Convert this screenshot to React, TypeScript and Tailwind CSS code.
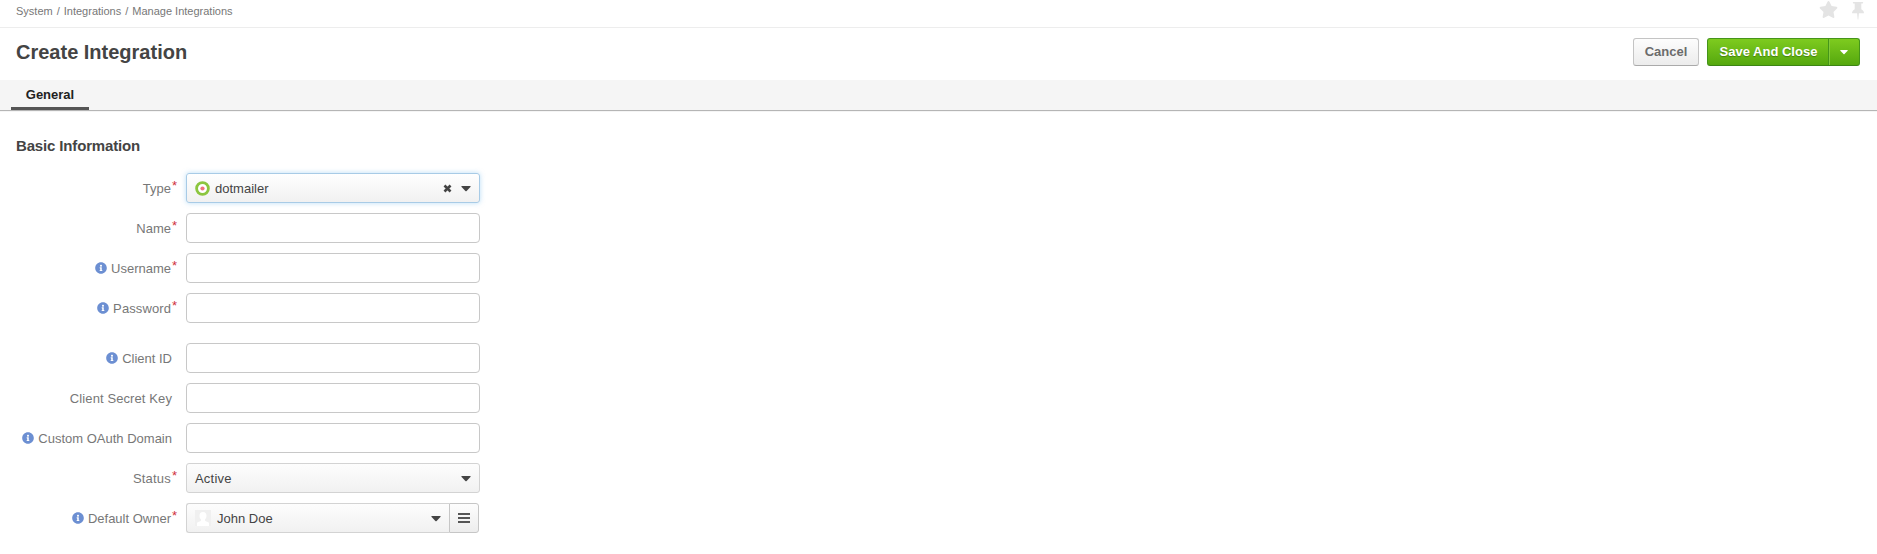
import type { ReactNode } from 'react';
import { FaInfoCircle, FaStar } from 'react-icons/fa';

function Caret({ className }: { className: string }) {
  return (
    <svg viewBox="0 0 10 6" className={className} fill="currentColor" aria-hidden="true">
      <path d="M1 0h8q1 0 .6.8L5.600 5q-.6.6-1.200 0L.4.8Q0 0 1 0z" />
    </svg>
  );
}

type RowProps = {
  label: string;
  info?: boolean;
  required?: boolean;
  gap?: boolean;
  labelClass?: string;
  children?: ReactNode;
};

function Row({ label, info, required, gap, labelClass = '', children }: RowProps) {
  return (
    <div className={`flex h-[30px] items-center ${gap ? 'mt-[20px]' : 'mt-[10px]'}`}>
      <div
        className={`flex shrink-0 items-center justify-end text-[13px] leading-[18px] text-[#777] ${required ? 'w-[171px]' : 'w-[172px]'}`}
      >
        {info && <FaInfoCircle className="mr-[4px] size-[12px] text-[#6c8fd2]" />}
        <span className={`whitespace-nowrap pt-[2px] ${labelClass}`}>{label}</span>
      </div>
      <div
        className={`shrink-0 text-[13px] leading-[18px] text-[#d03040] ${required ? 'w-[15px] pl-px' : 'w-[14px]'}`}
      >
        {required && <span className="-mt-[4px] block">*</span>}
      </div>
      {children ?? (
        <input
          aria-label={label}
          className="h-[30px] w-[294px] rounded-[4px] border border-[#c8c8c8] bg-white px-2 outline-none"
        />
      )}
    </div>
  );
}

export default function App() {
  return (
    <div className="h-[554px] overflow-hidden bg-white font-['Liberation_Sans',Arial,sans-serif] text-[#444]">
      <div className="flex h-[28px] items-start justify-between border-b border-[#ededed] pl-[16px] pr-[13px]">
        <nav className="mt-[4px] flex gap-[4px] text-[11px] leading-[15px] text-[#777]">
          <span>System</span>
          <span>/</span>
          <span>Integrations</span>
          <span>/</span>
          <span>Manage Integrations</span>
        </nav>
        <div className="flex items-start gap-[14px] text-[#e4e4e4]">
          <FaStar className="mt-[1px] h-[17px] w-[19px]" />
          <svg viewBox="0 0 12 18" className="mt-[2px] h-[18px] w-[12px]" fill="currentColor" aria-hidden="true">
            <path d="M1.500 0h9q.7 0 .7.8t-.7.8H9.300v5.600C11 8 12 9.400 12 11.300H6.900L6.300 17.500h-.6L5.100 11.300H0C0 9.400 1 8 2.700 7.200V1.600H1.500q-.7 0-.7-.8T1.500 0z" />
          </svg>
        </div>
      </div>

      <header className="flex h-[52px] items-start justify-between pl-[16px] pr-[17px]">
        <h1 className="mt-[12px] text-[20px] font-bold leading-[24px]">Create Integration</h1>
        <div className="mt-[10px] flex gap-[8px] text-[13px] font-bold leading-[18px]">
          <button className="h-[28px] w-[66px] rounded-[3px] border border-[#c4c4c4] border-b-[#aaa] bg-linear-to-b from-[#fdfdfd] to-[#ececec] text-[#6b6b6b]">
            Cancel
          </button>
          <div className="flex h-[28px] w-[153px] overflow-hidden rounded-[3px] border border-[#45951a] border-b-[#3c8514] bg-linear-to-b from-[#7ecb1f] to-[#55a80e] text-white">
            <button className="w-[121px] border-r border-[#45951a] pl-px text-shadow-[0_1px_1px_rgba(0,0,0,0.3)]">
              Save And Close
            </button>
            <button aria-label="More actions" className="flex flex-1 items-center justify-center border-l border-[#82cb3a] pr-px">
              <Caret className="h-[5px] w-[8px]" />
            </button>
          </div>
        </div>
      </header>

      <div className="flex h-[31px] border-b border-[#b5b5b5] bg-[#f5f5f5] pl-[11px]">
        <div className="h-[30px] w-[78px] border-b-[3px] border-[#555] pt-[6px] text-center text-[13px] font-bold leading-[18px] text-[#222]">
          General
        </div>
      </div>
      <div className="h-px bg-[#f5f5f5]" />

      <main>
        <h2 className="ml-[16px] mt-[24px] text-[15px] font-bold leading-[20px] tracking-[-0.15px]">Basic Information</h2>
        <div className="mt-[17px]">
          <Row label="Type" required>
            <div className="flex h-[30px] w-[294px] items-center rounded-[3px] border border-[#a8cbe6] bg-linear-to-b from-white to-[#f1f1f1] pl-[8px] pr-[8px] text-[#444] shadow-[0_0_5px_rgba(120,190,240,0.5)]">
              <svg viewBox="0 0 15 15" className="size-[15px]" aria-hidden="true">
                <circle cx="7.500" cy="7.500" r="5.900" fill="#fff" stroke="#8cc63f" strokeWidth="2.800" />
                <circle cx="7.500" cy="7.500" r="2.100" fill="#f0747c" />
              </svg>
              <span className="ml-[5px] flex-1 pt-[2px] text-[13px]">dotmailer</span>
              <svg viewBox="0 0 8 8" className="mr-[9px] mt-px size-[9px]" aria-hidden="true">
                <path d="M1.300 1.300l5.400 5.400M6.700 1.300L1.300 6.700" stroke="currentColor" strokeWidth="2.300" />
              </svg>
              <Caret className="mt-px h-[6px] w-[10px]" />
            </div>
          </Row>
          <Row label="Name" required />
          <Row label="Username" info required />
          <Row label="Password" info required labelClass="tracking-[0.1px]" />
          <Row label="Client ID" info gap />
          <Row label="Client Secret Key" labelClass="tracking-[0.1px]" />
          <Row label="Custom OAuth Domain" info />
          <Row label="Status" required labelClass="tracking-[0.2px]">
            <div className="flex h-[30px] w-[294px] items-center justify-between rounded-[3px] border border-[#d3d3d3] bg-linear-to-b from-[#fdfdfd] to-[#f1f1f1] pl-[8px] pr-[8px] text-[13px]">
              <span className="pt-[2px] tracking-[0.2px]">Active</span>
              <Caret className="mt-px h-[6px] w-[10px]" />
            </div>
          </Row>
          <Row label="Default Owner" info required>
            <div className="flex h-[30px] w-[293px]">
              <div className="flex w-[263px] items-center rounded-l-[3px] border border-r-0 border-[#d3d3d3] bg-linear-to-b from-[#fdfdfd] to-[#f1f1f1] pl-[8px] pr-[8px] text-[13px]">
                <svg viewBox="0 0 16 16" className="size-[16px]" aria-hidden="true">
                  <rect width="16" height="16" fill="#f0f0f0" />
                  <path d="M8 2c2.300 0 3.500 1.600 3.500 3.800 0 1.700-.6 3-1.500 3.800v1.200l4 1.900V16H2v-3.300l4-1.900V9.600C5.100 8.800 4.500 7.500 4.500 5.800 4.500 3.600 5.700 2 8 2z" fill="#fff" />
                </svg>
                <span className="ml-[6px] flex-1 pt-[2px]">John Doe</span>
                <Caret className="mt-px h-[6px] w-[10px]" />
              </div>
              <button aria-label="Choose owner" className="flex w-[30px] items-center justify-center rounded-r-[3px] border border-[#c6c6c6] bg-linear-to-b from-[#fdfdfd] to-[#ededed]">
                <svg viewBox="0 0 12 10" className="h-[10px] w-[12px]" fill="#555" aria-hidden="true">
                  <path d="M0 0h12v2H0zM0 4h12v2H0zM0 8h12v2H0z" />
                </svg>
              </button>
            </div>
          </Row>
        </div>
      </main>
    </div>
  );
}
